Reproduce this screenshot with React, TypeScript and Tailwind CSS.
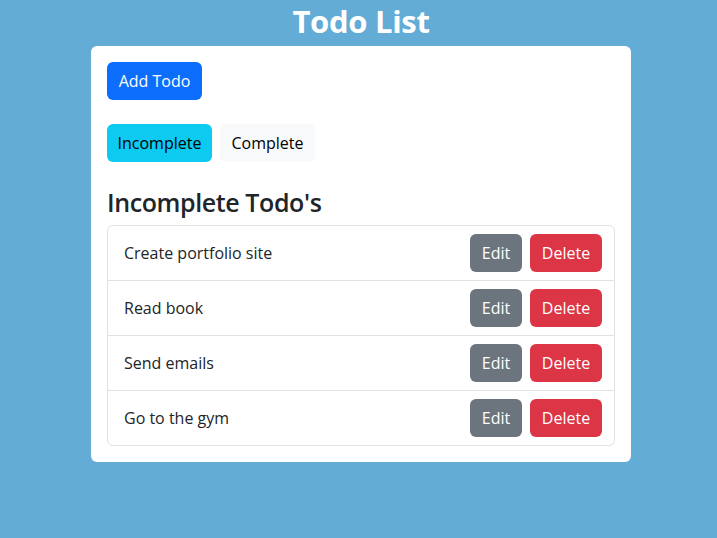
const todos = ["Create portfolio site", "Read book", "Send emails", "Go to the gym"]

export default function App() {
  return (
    <div
      className="min-h-[538px] w-full bg-[#63acd6] text-[#212529]"
      style={{ fontFamily: '"Open Sans", "Noto Sans", sans-serif' }}
    >
      <div className="ml-[91px] w-[540px]">
        {/* Title */}
        <h1 className="h-[46px] pt-[2px] text-center text-[31px] font-bold leading-[38px] tracking-[-0.3px] text-white">
          Todo List
        </h1>

        {/* Card */}
        <div className="rounded-md bg-white p-4">
          <button className="h-[38px] w-[95px] rounded-md bg-[#0d6efd] text-[16px] text-white">
            Add Todo
          </button>

          <div className="mt-6 flex gap-2">
            <button className="h-[38px] w-[105px] rounded-md bg-[#0dcaf0] text-[16px] text-black">
              Incomplete
            </button>
            <button className="h-[38px] w-[95px] rounded-md bg-[#f8f9fa] text-[16px] text-black">
              Complete
            </button>
          </div>

          <h2 className="mt-[24px] mb-[7px] h-[32px] text-[25px] font-semibold leading-[32px] tracking-[-0.4px]">
            Incomplete Todo's
          </h2>

          {/* List group */}
          <ul className="rounded-md border border-[#dee2e6]">
            {todos.map((t, i) => (
              <li
                key={t}
                className={
                  "flex items-center justify-between pl-4 pr-3 " +
                  (i > 0 ? "h-[55px] border-t border-[#dee2e6]" : "h-[54px]")
                }
              >
                <span className="text-[16px]">{t}</span>
                <div className="flex gap-2">
                  <button className="h-[38px] w-[52px] rounded-md bg-[#6c757d] text-[16px] text-white">
                    Edit
                  </button>
                  <button className="h-[38px] w-[72px] rounded-md bg-[#dc3545] text-[16px] text-white">
                    Delete
                  </button>
                </div>
              </li>
            ))}
          </ul>
        </div>
      </div>
    </div>
  )
}
